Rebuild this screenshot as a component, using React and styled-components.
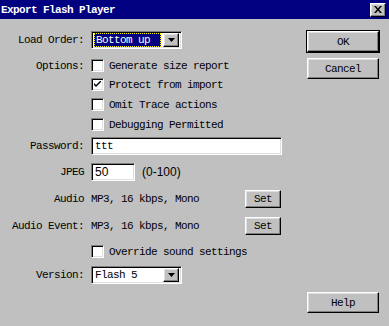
import styled, { createGlobalStyle } from "styled-components";

const Global = createGlobalStyle`
  html, body {
    margin: 0;
    padding: 0;
    background: #c0c0c0;
  }
  body {
    font-family: "Liberation Mono", "DejaVu Sans Mono", monospace;
    font-size: 11px;
    letter-spacing: -0.6px;
    color: #000;
  }
`;

const Window = styled.div`
  width: 389px;
  height: 326px;
  background: #c0c0c0;
  display: flex;
  flex-direction: column;
  overflow: hidden;
`;

const TitleBar = styled.div`
  height: 19px;
  background: #000080;
  display: flex;
  align-items: center;
  padding: 0 3px 0 1px;
  box-sizing: border-box;
`;

const Title = styled.span`
  flex: 1;
  color: #fff;
  font-weight: bold;
  font-size: 11px;
`;

const raised = `
  background: #c0c0c0;
  border-top: 1px solid #fff;
  border-left: 1px solid #fff;
  border-right: 1px solid #000;
  border-bottom: 1px solid #000;
  box-shadow: inset -1px -1px #808080, inset 1px 1px #dfdfdf;
  box-sizing: border-box;
`;

const sunken = `
  background: #fff;
  border-top: 1px solid #808080;
  border-left: 1px solid #808080;
  border-right: 1px solid #fff;
  border-bottom: 1px solid #fff;
  box-shadow: inset 1px 1px #000, inset -1px -1px #dfdfdf;
  box-sizing: border-box;
`;

const CloseBtn = styled.div`
  ${raised}
  width: 16px;
  height: 14px;
  display: flex;
  align-items: center;
  justify-content: center;
`;

const Body = styled.div`
  flex: 1;
  display: flex;
`;

const Form = styled.div`
  flex: 1;
  padding-top: 12px;
  display: flex;
  flex-direction: column;
`;

const Row = styled.div`
  display: flex;
  align-items: center;
  height: ${(p) => p.$h || 18}px;
  margin-top: ${(p) => p.$mt || 0}px;
`;

const Label = styled.div`
  width: 84px;
  text-align: right;
  margin-right: 7px;
  white-space: pre;
  flex-shrink: 0;
`;

const Side = styled.div`
  width: 72px;
  margin-right: 10px;
  padding: 12px 0 13px;
  display: flex;
  flex-direction: column;
`;

const Button = styled.div`
  ${raised}
  width: ${(p) => p.$w || 72}px;
  height: ${(p) => p.$h || 21}px;
  display: flex;
  align-items: center;
  justify-content: center;
  margin-top: ${(p) => (p.$push ? "auto" : `${p.$mt || 0}px`)};
  ${(p) => p.$default && `outline: 1px solid #000;`}
`;

const Select = styled.div`
  ${sunken}
  width: 91px;
  height: 18px;
  display: flex;
  align-items: center;
  padding: 2px;
`;

const SelectText = styled.div`
  flex: 1;
  height: 14px;
  display: flex;
  align-items: center;
  padding-left: 1px;
  box-sizing: border-box;
  ${(p) =>
    p.$focus &&
    `
    background: #000080;
    color: #fff;
    border: 1px dotted #ffff00;
    margin-right: 2px;
  `}
`;

const ArrowBtn = styled.div`
  ${raised}
  width: 16px;
  height: 14px;
  display: flex;
  align-items: center;
  justify-content: center;
`;

const Box = styled.div`
  ${sunken}
  width: 13px;
  height: 13px;
  margin-right: 5px;
  display: flex;
  align-items: center;
  justify-content: center;
  flex-shrink: 0;
`;

const Input = styled.div`
  ${sunken}
  width: ${(p) => p.$w}px;
  height: 18px;
  padding: 0 3px;
  display: flex;
  align-items: center;
  font-family: ${(p) => (p.$sans ? `"Liberation Sans", Arial, sans-serif` : "inherit")};
  font-size: ${(p) => (p.$sans ? 12 : 11)}px;
  letter-spacing: ${(p) => (p.$sans ? 0 : -0.6)}px;
`;

const Hint = styled.span`
  margin-left: 7px;
  font-family: "Liberation Sans", Arial, sans-serif;
  font-size: 12px;
  letter-spacing: 0;
`;

const Value = styled.div`
  width: 154px;
  white-space: pre;
`;

const Arrow = () => (
  <svg width="7" height="4" viewBox="0 0 7 4">
    <polygon points="0,0 7,0 3.5,4" fill="#000" />
  </svg>
);

const Check = ({ on }) => (
  <Box>
    {on && (
      <svg width="7" height="7" viewBox="0 0 7 7">
        <path d="M0 2 L0 4 L2 6 L7 1 L7 -1 L2 4 Z" fill="#000" />
      </svg>
    )}
  </Box>
);

const Dropdown = ({ text, focus }) => (
  <Select>
    <SelectText $focus={focus}>{text}</SelectText>
    <ArrowBtn>
      <Arrow />
    </ArrowBtn>
  </Select>
);

export default function App() {
  return (
    <>
      <Global />
      <Window>
        <TitleBar>
          <Title>Export Flash Player</Title>
          <CloseBtn>
            <svg width="8" height="7" viewBox="0 0 8 7">
              <path d="M0 0 L2 0 L4 2.5 L6 0 L8 0 L5 3.5 L8 7 L6 7 L4 4.5 L2 7 L0 7 L3 3.5 Z" fill="#000" />
            </svg>
          </CloseBtn>
        </TitleBar>
        <Body>
          <Form>
            <Row $h={18}>
              <Label>Load Order:</Label>
              <Dropdown text="Bottom up" focus />
            </Row>
            <Row $h={19} $mt={7}>
              <Label>Options:</Label>
              <Check />
              Generate size report
            </Row>
            <Row $h={19}>
              <Label />
              <Check on />
              Protect from import
            </Row>
            <Row $h={19} $mt={1}>
              <Label />
              <Check />
              Omit Trace actions
            </Row>
            <Row $h={19} $mt={1}>
              <Label />
              <Check />
              Debugging Permitted
            </Row>
            <Row $mt={3}>
              <Label>Password:</Label>
              <Input $w={191}>ttt</Input>
            </Row>
            <Row $mt={8}>
              <Label>JPEG</Label>
              <Input $w={44} $sans>
                50
              </Input>
              <Hint>(0-100)</Hint>
            </Row>
            <Row $mt={9}>
              <Label>Audio</Label>
              <Value>MP3, 16 kbps, Mono</Value>
              <Button $w={36} $h={18}>
                Set
              </Button>
            </Row>
            <Row $mt={9}>
              <Label>Audio Event:</Label>
              <Value>MP3, 16 kbps, Mono</Value>
              <Button $w={36} $h={18}>
                Set
              </Button>
            </Row>
            <Row $h={19} $mt={7}>
              <Label />
              <Check />
              Override sound settings
            </Row>
            <Row $mt={5}>
              <Label>Version:</Label>
              <Dropdown text="Flash 5" />
            </Row>
          </Form>
          <Side>
            <Button $default>OK</Button>
            <Button $mt={6}>Cancel</Button>
            <Button $push>Help</Button>
          </Side>
        </Body>
      </Window>
    </>
  );
}
